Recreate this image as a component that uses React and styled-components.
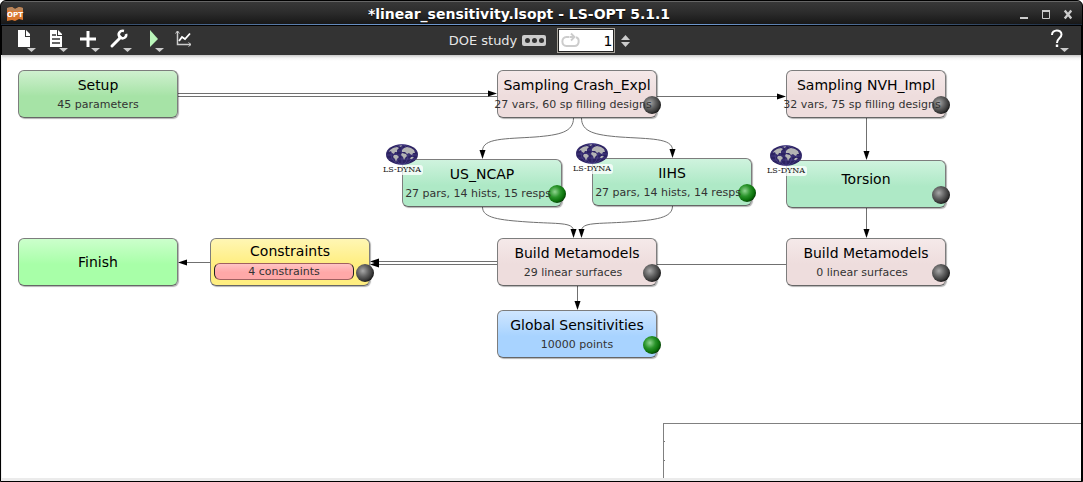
import React from "react";
import styled, { createGlobalStyle } from "styled-components";

const GlobalStyle = createGlobalStyle`
  * { box-sizing: border-box; }
  body {
    margin: 0;
    background: #fff;
    font-family: "DejaVu Sans", sans-serif;
  }
  button {
    font: inherit;
    color: inherit;
    padding: 0;
    border: 0;
    background: none;
    cursor: pointer;
  }
  svg { display: block; }
`;

const Window = styled.div`
  display: flex;
  flex-direction: column;
  min-height: 100vh;
  border: 1px solid #000;
  border-radius: 6px 6px 0 0;
  background: #000;
  overflow: hidden;
`;

const TitleBar = styled.header`
  display: grid;
  grid-template-columns: 1fr auto 1fr;
  align-items: center;
  height: 25px;
  padding: 0 6px 0 5px;
  border-top: 1px solid #666;
  border-bottom: 1px solid #000;
  background:
    linear-gradient(90deg, #1c2a3c, #6d96cc 35%, #6d96cc 65%, #1c2a3c) bottom / 100% 1px no-repeat,
    linear-gradient(#383838, #2c2c2c 45%, #161616);
`;

const Title = styled.h1`
  margin: 0 44px 0 0;
  font-size: 14px;
  line-height: 16px;
  font-weight: bold;
  color: #fff;
  text-shadow: 0 1px 1px #000;
  white-space: nowrap;
`;

const WindowButtons = styled.div`
  display: flex;
  justify-content: flex-end;
  gap: 6px;
`;

const WindowButton = styled.button`
  width: 16px;
  height: 16px;
`;

const Toolbar = styled.div`
  display: grid;
  grid-template-columns: 1fr auto 1fr;
  align-items: center;
  height: 29px;
  margin: 0 1px;
  padding: 0 4px 0 10px;
  background: #333;
`;

const ToolGroup = styled.div`
  display: flex;
  justify-content: ${(p) => (p.$end ? "flex-end" : "flex-start")};
`;

const ToolButton = styled.button`
  width: 32px;
  height: 29px;
`;

const StudyGroup = styled.div`
  display: flex;
  align-items: center;
  margin-right: 10px;
`;

const StudyLabel = styled.label`
  font-size: 13px;
  line-height: 16px;
  color: #e6e6e6;
`;

const MoreButton = styled.button`
  display: flex;
  align-items: center;
  justify-content: center;
  gap: 2px;
  width: 24px;
  height: 11px;
  margin: 0 11px 0 5px;
  border-radius: 2px;
  background: #ccc;
`;

const Dot = styled.span`
  width: 5px;
  height: 5px;
  border-radius: 50%;
  background: #333;
`;

const CounterBox = styled.div`
  display: flex;
  align-items: center;
  width: 58px;
  height: 25px;
  padding: 0 2px 0 3px;
  border: 1px solid #a8a49c;
  background: #fff;
  box-shadow: inset 0 0 0 1px #222;
`;

const CounterInput = styled.input`
  flex: 1;
  min-width: 0;
  height: 20px;
  padding: 0;
  border: 0;
  outline: 0;
  background: transparent;
  color: #000;
  font: 14px/20px "DejaVu Sans", sans-serif;
  text-align: right;
`;

const Stepper = styled.div`
  display: flex;
  flex-direction: column;
  gap: 2px;
  margin-left: 6px;
`;

const StepButton = styled.button`
  width: 9px;
  height: 5px;
`;

const Canvas = styled.main`
  position: relative;
  flex: 1;
  min-height: 423px;
  margin-right: 1px;
  border-bottom: 3px solid #ebebeb;
  border-left: 1px solid #eee;
  overflow: hidden;
  background: linear-gradient(#c8c8c8, #f4f4f4 3px, #fff 6px);
`;

const Edges = styled.svg`
  position: absolute;
  left: 0;
  top: 0;
`;

const NodeBox = styled.button`
  position: absolute;
  left: ${(p) => p.$x}px;
  top: ${(p) => p.$y}px;
  display: flex;
  flex-direction: column;
  align-items: center;
  justify-content: ${(p) => (p.$centered ? "center" : "flex-start")};
  width: 160px;
  height: 48px;
  padding-top: ${(p) => (p.$centered ? 0 : p.$padTop)}px;
  border: 1px solid #7d7d7d;
  border-bottom-color: #666;
  border-radius: 6px;
  box-shadow: 1px 1px 1px rgba(0, 0, 0, 0.3);
  background: ${(p) => `linear-gradient(${p.$tone[0]}, ${p.$tone[1]} 55%)`};
`;

const NodeTitle = styled.span`
  font-size: 14px;
  line-height: 18px;
  color: #000;
  white-space: nowrap;
`;

const NodeInfo = styled.span`
  position: relative;
  z-index: 1;
  margin-top: 2px;
  padding-right: ${(p) => (p.$reserve ? "8px" : "0")};
  font-size: 11px;
  line-height: 18px;
  color: #333;
  white-space: nowrap;
`;

const InfoPill = styled.span`
  align-self: flex-start;
  width: 140px;
  height: 17px;
  margin: 3px 0 0 3px;
  border: 1px solid #a06060;
  border-left-color: #222;
  border-right-color: #222;
  border-radius: 6px;
  background: linear-gradient(#ffc4c4, #ffa8a8 55%);
  font-size: 11px;
  line-height: 15px;
  color: #333;
  text-align: center;
`;

const Orb = styled.span`
  position: absolute;
  right: -5px;
  bottom: 3px;
  width: 18px;
  height: 18px;
  border-radius: 50%;
  background: ${(p) =>
    p.$ok
      ? "radial-gradient(circle at 38% 38%, #90d490, #2a942a 35%, #0a700a 60%, #053805 75%)"
      : "radial-gradient(circle at 38% 38%, #a8a8a8, #646464 35%, #3a3a3a 60%, #151515 75%)"};
`;

const SolverBadge = styled.span`
  position: absolute;
  left: -22px;
  top: -16px;
  display: flex;
  flex-direction: column;
  align-items: center;
  width: 42px;
`;

const SolverName = styled.span`
  padding: 0 2px;
  border-radius: 3px;
  background: rgba(255, 255, 255, 0.75);
  font-family: "DejaVu Serif", serif;
  font-size: 8px;
  line-height: 10px;
  color: #111;
  white-space: nowrap;
`;

const PreviewPanel = styled.aside`
  position: absolute;
  right: 0;
  bottom: 0;
  display: flex;
  flex-direction: column;
  gap: 18px;
  width: 418px;
  height: 55px;
  padding-top: 17px;
  border-top: 1px solid #808080;
  border-left: 1px solid #808080;
`;

const Tick = styled.span`
  width: 1px;
  height: 1px;
  background: #777;
`;

const TONES = {
  setup: ["#cff0cf", "#a6e3a6"],
  finish: ["#ccffcc", "#a8ffa8"],
  sampling: ["#f5e9e9", "#eedddd"],
  solver: ["#cff3de", "#aee9c6"],
  constraint: ["#fff6b4", "#ffee80"],
  sensitivity: ["#cfe6ff", "#a8d3ff"],
};

const NODES = [
  { x: 16, y: 15, tone: "setup", title: "Setup", info: "45 parameters" },
  { x: 495, y: 15, tone: "sampling", title: "Sampling Crash_Expl", info: "27 vars, 60 sp filling designs", reserve: true, orb: "idle" },
  { x: 784, y: 15, tone: "sampling", title: "Sampling NVH_Impl", info: "32 vars, 75 sp filling designs", reserve: true, orb: "idle" },
  { x: 400, y: 104, tone: "solver", title: "US_NCAP", info: "27 pars, 14 hists, 15 resps", reserve: true, orb: "ok", solver: true },
  { x: 590, y: 103, tone: "solver", title: "IIHS", info: "27 pars, 14 hists, 14 resps", reserve: true, orb: "ok", solver: true },
  { x: 784, y: 105, tone: "solver", title: "Torsion", padTop: 9, orb: "idle", solver: true },
  { x: 16, y: 183, tone: "finish", title: "Finish", centered: true },
  { x: 208, y: 183, tone: "constraint", title: "Constraints", padTop: 3, pill: "4 constraints", orb: "idle" },
  { x: 495, y: 183, tone: "sampling", title: "Build Metamodels", info: "29 linear surfaces", reserve: true, orb: "idle" },
  { x: 784, y: 183, tone: "sampling", title: "Build Metamodels", info: "0 linear surfaces", reserve: true, orb: "idle" },
  { x: 495, y: 255, tone: "sensitivity", title: "Global Sensitivities", info: "10000 points", orb: "ok" },
];

const EDGES = [
  "M176 38.5H488",
  "M176 41.5H776",
  "M571.5 63C571.5 77 558 80 533 82C503 84 480.5 83 480.5 96",
  "M579.5 63C579.5 77 593 80 618 82C648 84 670.5 83 670.5 95",
  "M480.5 152C480.5 163 497 165 526 167C556 169 571.5 167 571.5 176",
  "M670.5 151C670.5 163 654 165 625 167C595 169 579.5 167 579.5 176",
  "M864.5 63V97",
  "M864.5 153V176",
  "M208 207.5H184",
  "M495 206.5H376",
  "M784 209.5H376",
  "M575.5 231V248",
];

const RIGHT_HEADS = [[495, 38.5], [784, 41.5]];
const LEFT_HEADS = [[176, 207.5], [368, 206.5], [368, 209.5]];
const DOWN_HEADS = [
  [480.5, 104], [670.5, 103], [571.5, 183], [579.5, 183],
  [864.5, 105], [864.5, 183], [575.5, 255],
];

function Globe() {
  return (
    <svg width="32" height="21" viewBox="0 0 32 21">
      <ellipse cx="16" cy="10.5" rx="16" ry="10.2" fill="#2c2262" />
      <g fill="none" stroke="#5b529a" strokeWidth="0.5">
        <path d="M1 7H31M0 11H32M2 15H30M16 0V21" />
        <ellipse cx="16" cy="10.5" rx="6" ry="10" />
        <ellipse cx="16" cy="10.5" rx="11" ry="10" />
      </g>
      <g fill="#b4b4b4">
        <path d="M4 6L7 4L11 3L13 4L11 6L11 8L9 8L8 10L6 9L5 7L3 8Z" />
        <path d="M8 11L11 11L13 13L11 15L10 18L9 15L7 13Z" />
        <path d="M16 6L18 4L21 3L25 4L28 6L29 9L27 9L26 11L24 10L23 9L21 10L19 8L16 8Z" />
        <path d="M16 9L20 10L21 12L19 14L18 16L17 13L15 11Z" />
        <path d="M25 13L28 13L26 15L24 15Z" />
        <path d="M13 2L16 1L15 3Z" />
      </g>
    </svg>
  );
}

function Node({ node }) {
  return (
    <NodeBox
      type="button"
      $x={node.x}
      $y={node.y}
      $tone={TONES[node.tone]}
      $centered={node.centered}
      $padTop={node.padTop ?? 5}
    >
      <NodeTitle>{node.title}</NodeTitle>
      {node.info && <NodeInfo $reserve={node.reserve}>{node.info}</NodeInfo>}
      {node.pill && <InfoPill>{node.pill}</InfoPill>}
      {node.orb && <Orb $ok={node.orb === "ok"} />}
      {node.solver && (
        <SolverBadge>
          <Globe />
          <SolverName>LS-DYNA</SolverName>
        </SolverBadge>
      )}
    </NodeBox>
  );
}

function Tool({ label, menu = true, children }) {
  return (
    <ToolButton type="button" aria-label={label}>
      <svg width="32" height="29" viewBox="0 0 32 29">
        {children}
        {menu && <path d="M15 22H24L19.500 26Z" fill="#ccc" />}
      </svg>
    </ToolButton>
  );
}

export default function App() {
  return (
    <>
      <GlobalStyle />
      <Window>
        <TitleBar>
          <svg width="18" height="16" viewBox="0 0 18 16">
            <path d="M1 2L6 1L9 3L13 1L17 2V14L13 13L9 15L6 14L1 15Z" fill="#d9772f" />
            <path d="M1 2L6 1L9 3L13 1L17 2V4L9 5L1 4Z" fill="#b8875e" />
            <text x="9" y="11" textAnchor="middle" fontSize="7" fontWeight="bold" fill="#fff">OPT</text>
          </svg>
          <Title>*linear_sensitivity.lsopt - LS-OPT 5.1.1</Title>
          <WindowButtons>
            <WindowButton type="button" aria-label="Minimize">
              <svg width="16" height="16"><path d="M4 12H12" stroke="#ccc" strokeWidth="2" /></svg>
            </WindowButton>
            <WindowButton type="button" aria-label="Maximize">
              <svg width="16" height="16">
                <path d="M4.500 4.500H11.500V12.500H4.500Z" fill="none" stroke="#ccc" />
                <path d="M4 5H12" stroke="#ccc" strokeWidth="2" />
              </svg>
            </WindowButton>
            <WindowButton type="button" aria-label="Close">
              <svg width="16" height="16"><path d="M5.500 5.500L10.500 11.500M10.500 5.500L5.500 11.500" stroke="#ccc" strokeWidth="2.400" strokeLinecap="square" /></svg>
            </WindowButton>
          </WindowButtons>
        </TitleBar>

        <Toolbar>
          <ToolGroup>
            <Tool label="New">
              <path d="M6 4H13V11H18V21H6Z" fill="#fff" />
              <path d="M14 4L18 8V10H14Z" fill="#fff" />
            </Tool>
            <Tool label="Open">
              <path d="M6 4H13V10H18V21H6Z" fill="#fff" />
              <path d="M14 4L18 8V9H14Z" fill="#fff" />
              <path d="M8 13H16M8 17H16" stroke="#333" strokeWidth="1.500" />
              <path d="M8 9H12" stroke="#333" strokeWidth="1.500" />
            </Tool>
            <Tool label="Add">
              <path d="M4 13H20M12 5V21" stroke="#fff" strokeWidth="3" />
            </Tool>
            <Tool label="Tools">
              <path d="M4 20L12 12" stroke="#fff" strokeWidth="3" strokeLinecap="round" />
              <path d="M16 5C12 4 9 8 12 11C15 14 19 11 18 8" fill="none" stroke="#fff" strokeWidth="2.600" />
              <path d="M11 8L15 12L12 13L10 11Z" fill="#fff" />
            </Tool>
            <Tool label="Run">
              <path d="M10 4L18 13L10 21Z" fill="#b9f5b9" />
            </Tool>
            <Tool label="Plot" menu={false}>
              <g fill="none" stroke="#ccc">
                <path d="M5.500 5V18.500H19" strokeWidth="1.500" />
                <path d="M3.500 7.500L5.500 5L7.500 7.500M16.500 16.500L19 18.500L16.500 20.500" />
                <path d="M7 15L10 11L13 13L18 7.500" stroke="#fff" strokeWidth="1.800" />
              </g>
            </Tool>
          </ToolGroup>

          <StudyGroup>
            <StudyLabel htmlFor="iteration">DOE study</StudyLabel>
            <MoreButton type="button" aria-label="Choose task">
              <Dot /><Dot /><Dot />
            </MoreButton>
            <CounterBox>
              <svg width="20" height="18" viewBox="0 0 20 18">
                <path d="M8 5H5.500C0 5 0 14 5.500 14H13.500C18.500 14 19 6.500 15 5.300" fill="none" stroke="#ccc" strokeWidth="2" />
                <path d="M8.500 5H13" stroke="#ccc" strokeWidth="2" />
                <path d="M10 1.500L13.500 5L10 8.500" fill="none" stroke="#ccc" strokeWidth="1.800" />
              </svg>
              <CounterInput id="iteration" type="text" defaultValue="1" />
            </CounterBox>
            <Stepper>
              <StepButton type="button" aria-label="Increase">
                <svg width="9" height="5"><path d="M0 5L4.500 0L9 5Z" fill="#ccc" /></svg>
              </StepButton>
              <StepButton type="button" aria-label="Decrease">
                <svg width="9" height="5"><path d="M0 0L4.500 5L9 0Z" fill="#ccc" /></svg>
              </StepButton>
            </Stepper>
          </StudyGroup>

          <ToolGroup $end>
            <Tool label="Help">
              <path d="M7 9C7 3 16.500 3 16.500 8.500C16.500 12 12 12 12 17" fill="none" stroke="#fff" strokeWidth="2" />
              <path d="M12 18.500V21" stroke="#fff" strokeWidth="2.400" />
            </Tool>
          </ToolGroup>
        </Toolbar>

        <Canvas>
          <Edges width="960" height="380" viewBox="0 0 960 380" aria-hidden="true">
            <g fill="none" stroke="#707070">
              {EDGES.map((d) => <path key={d} d={d} />)}
            </g>
            <g fill="#000">
              {RIGHT_HEADS.map(([x, y]) => <path key={`${x}-${y}`} d={`M${x} ${y}l-9 -3v6z`} />)}
              {LEFT_HEADS.map(([x, y]) => <path key={`${x}-${y}`} d={`M${x} ${y}l9 -3v6z`} />)}
              {DOWN_HEADS.map(([x, y]) => <path key={`${x}-${y}`} d={`M${x} ${y}l-3 -9h6z`} />)}
            </g>
          </Edges>
          {NODES.map((node) => <Node key={`${node.x}-${node.y}`} node={node} />)}
          <PreviewPanel aria-label="Preview">
            <Tick />
            <Tick />
          </PreviewPanel>
        </Canvas>
      </Window>
    </>
  );
}
